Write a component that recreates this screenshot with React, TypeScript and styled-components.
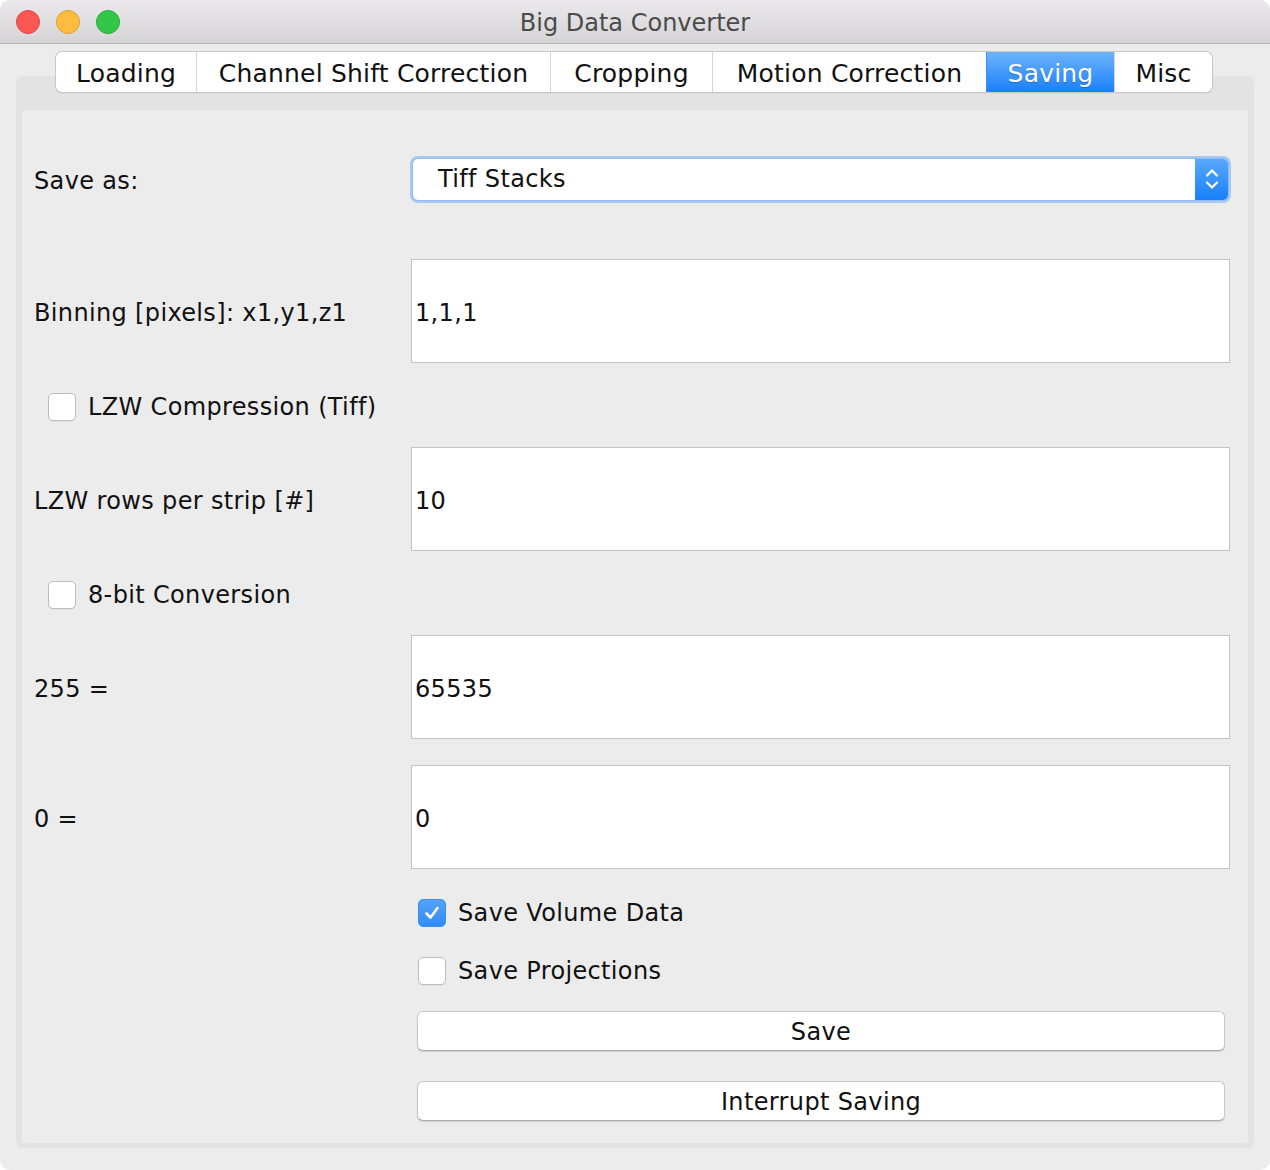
import React from "react";
import styled, { createGlobalStyle, css } from "styled-components";

const GlobalStyle = createGlobalStyle`
  html, body {
    margin: 0;
    padding: 0;
    background: #ffffff;
  }
  body {
    font-family: "DejaVu Sans", "Noto Sans", sans-serif;
    -webkit-font-smoothing: antialiased;
  }
`;

const FONT = `"DejaVu Sans", "Noto Sans", sans-serif`;

const Window = styled.div`
  width: 1270px;
  height: 1170px;
  background: #ececec;
  border-radius: 10px;
  overflow: hidden;
  display: flex;
  flex-direction: column;
`;

const TitleBar = styled.div`
  height: 43px;
  flex: 0 0 43px;
  border-bottom: 1px solid #b4b4b4;
  background: linear-gradient(#ebe9eb, #d5d3d5);
  display: flex;
  align-items: center;
  position: relative;
`;

const Lights = styled.div`
  display: flex;
  gap: 16px;
  padding-left: 16px;
`;

const Light = styled.div<{ $color: string; $border: string }>`
  width: 22px;
  height: 22px;
  border-radius: 50%;
  background: ${(p) => p.$color};
  border: 1px solid ${(p) => p.$border};
`;

const Title = styled.div`
  position: absolute;
  left: 0;
  right: 0;
  top: 9px;
  text-align: center;
  font-family: ${FONT};
  font-size: 24px;
  color: #4b4b4b;
  pointer-events: none;
`;

const Body = styled.div`
  flex: 1;
  padding: 8px 16px 22px;
  display: flex;
  flex-direction: column;
`;

const TabBar = styled.div`
  display: flex;
  justify-content: center;
  position: relative;
  z-index: 1;
  height: 40px;
  margin-left: 40px;
  margin-right: 42px;
`;

const TabStrip = styled.div`
  display: flex;
  border-radius: 6px;
  box-shadow: 0 0 0 1px #c8c8c8, 0 1px 1px rgba(0, 0, 0, 0.25);
  overflow: hidden;
  background: #fff;
`;

const Tab = styled.div<{ $w: number; $active?: boolean }>`
  width: ${(p) => p.$w}px;
  height: 40px;
  padding-top: 2px;
  display: flex;
  align-items: center;
  justify-content: center;
  font-family: ${FONT};
  font-size: 25px;
  letter-spacing: 0.2px;
  color: #111;
  border-left: 1px solid #d6d6d6;
  box-sizing: border-box;
  &:first-child {
    border-left: none;
  }
  ${(p) =>
    p.$active &&
    css`
      background: linear-gradient(#6db4fb, #1a7ffa);
      color: #fff;
      border-left-color: #3a8ef5;
      text-shadow: 0 1px 1px rgba(0, 0, 0, 0.2);
    `}
`;

const Pane = styled.div`
  flex: 1;
  margin-top: -16px;
  background: #e3e3e3;
  border-radius: 6px;
  padding: 34px 6px 5px;
  display: flex;
`;

const Panel = styled.div`
  flex: 1;
  background: #ececec;
  border-radius: 3px;
  display: flex;
  flex-direction: column;
`;

const Row = styled.div<{ $h: number; $mt: number }>`
  height: ${(p) => p.$h}px;
  margin-top: ${(p) => p.$mt}px;
  display: grid;
  grid-template-columns: 389px 1fr;
  align-items: center;
`;

const textStyle = css`
  font-family: ${FONT};
  font-size: 24px;
  letter-spacing: 0.35px;
  color: #111;
`;

const Label = styled.div`
  ${textStyle};
  padding-left: 12px;
  padding-top: 3px;
`;

const Field = styled.div`
  ${textStyle};
  height: 100%;
  width: 819px;
  box-sizing: border-box;
  background: #fff;
  border: 1px solid #c3c3c3;
  display: flex;
  align-items: center;
  padding-left: 3px;
  padding-top: 3px;
`;

const Select = styled.div`
  height: 41px;
  width: 815px;
  margin-left: 2px;
  box-sizing: border-box;
  background: #fff;
  border-radius: 5px;
  box-shadow: 0 0 0 1px #8fbdf2, 0 0 0 3px rgba(116, 170, 240, 0.55);
  display: flex;
  align-items: center;
  overflow: hidden;
`;

const SelectText = styled.div`
  ${textStyle};
  flex: 1;
  padding-left: 25px;
`;

const SelectArrow = styled.div`
  width: 33px;
  height: 100%;
  background: linear-gradient(#5aa9fb, #1a7ffa);
  display: flex;
  align-items: center;
  justify-content: center;
`;

const CheckLine = styled.div<{ $indent: number }>`
  ${textStyle};
  display: flex;
  align-items: center;
  gap: 12px;
  padding-left: ${(p) => p.$indent}px;
`;

const Box = styled.div<{ $checked?: boolean }>`
  width: 28px;
  height: 28px;
  box-sizing: border-box;
  border-radius: 5px;
  display: flex;
  align-items: center;
  justify-content: center;
  ${(p) =>
    p.$checked
      ? css`
          background: linear-gradient(#54a3fb, #2f8cf8);
          border: 1px solid #3b8ef2;
        `
      : css`
          background: #fff;
          border: 1px solid #bdbdbd;
          box-shadow: 0 1px 0 rgba(0, 0, 0, 0.05);
        `}
`;

const Button = styled.div`
  ${textStyle};
  width: 808px;
  height: 40px;
  margin-left: 6px;
  box-sizing: border-box;
  background: #fff;
  border-radius: 6px;
  border: 1px solid #c8c8c8;
  border-bottom-color: #acacac;
  box-shadow: 0 1px 1px rgba(0, 0, 0, 0.12);
  display: flex;
  align-items: center;
  justify-content: center;
  padding-top: 2px;
`;

const tabs = [
  { name: "Loading", w: 140 },
  { name: "Channel Shift Correction", w: 354 },
  { name: "Cropping", w: 162 },
  { name: "Motion Correction", w: 274 },
  { name: "Saving", w: 128, active: true },
  { name: "Misc", w: 98 },
];

function Checkbox({ label, checked, indent }: { label: string; checked?: boolean; indent: number }) {
  return (
    <CheckLine $indent={indent}>
      <Box $checked={checked}>
        {checked && (
          <svg width="18" height="18" viewBox="0 0 18 18">
            <path d="M3.5 9.5 L7.5 13.5 L14.5 4" fill="none" stroke="#fff" strokeWidth="2.6" strokeLinecap="round" strokeLinejoin="round" />
          </svg>
        )}
      </Box>
      {label}
    </CheckLine>
  );
}

export default function App() {
  return (
    <>
      <GlobalStyle />
      <Window>
        <TitleBar>
          <Lights>
            <Light $color="#fc5753" $border="#df4744" />
            <Light $color="#fdbc40" $border="#de9f34" />
            <Light $color="#33c748" $border="#27aa35" />
          </Lights>
          <Title>Big Data Converter</Title>
        </TitleBar>
        <Body>
          <TabBar>
            <TabStrip>
              {tabs.map((t) => (
                <Tab key={t.name} $w={t.w} $active={t.active}>
                  {t.name}
                </Tab>
              ))}
            </TabStrip>
          </TabBar>
          <Pane>
            <Panel>
              <Row $h={42} $mt={48}>
                <Label>Save as:</Label>
                <Select>
                  <SelectText>Tiff Stacks</SelectText>
                  <SelectArrow>
                    <svg width="18" height="28" viewBox="0 0 18 28">
                      <path d="M4 10.5 L9 5.5 L14 10.5 M4 17.5 L9 22.5 L14 17.5" fill="none" stroke="#fff" strokeWidth="2.2" strokeLinecap="round" strokeLinejoin="round" />
                    </svg>
                  </SelectArrow>
                </Select>
              </Row>
              <Row $h={104} $mt={59}>
                <Label>Binning [pixels]: x1,y1,z1</Label>
                <Field>1,1,1</Field>
              </Row>
              <Row $h={28} $mt={30}>
                <Checkbox label="LZW Compression (Tiff)" indent={26} />
              </Row>
              <Row $h={104} $mt={26}>
                <Label>LZW rows per strip [#]</Label>
                <Field>10</Field>
              </Row>
              <Row $h={28} $mt={30}>
                <Checkbox label="8-bit Conversion" indent={26} />
              </Row>
              <Row $h={104} $mt={26}>
                <Label>255 =</Label>
                <Field>65535</Field>
              </Row>
              <Row $h={104} $mt={26}>
                <Label>0 =</Label>
                <Field>0</Field>
              </Row>
              <Row $h={28} $mt={30}>
                <div />
                <Checkbox label="Save Volume Data" checked indent={7} />
              </Row>
              <Row $h={28} $mt={30}>
                <div />
                <Checkbox label="Save Projections" indent={7} />
              </Row>
              <Row $h={40} $mt={26}>
                <div />
                <Button>Save</Button>
              </Row>
              <Row $h={40} $mt={30}>
                <div />
                <Button>Interrupt Saving</Button>
              </Row>
            </Panel>
          </Pane>
        </Body>
      </Window>
    </>
  );
}
